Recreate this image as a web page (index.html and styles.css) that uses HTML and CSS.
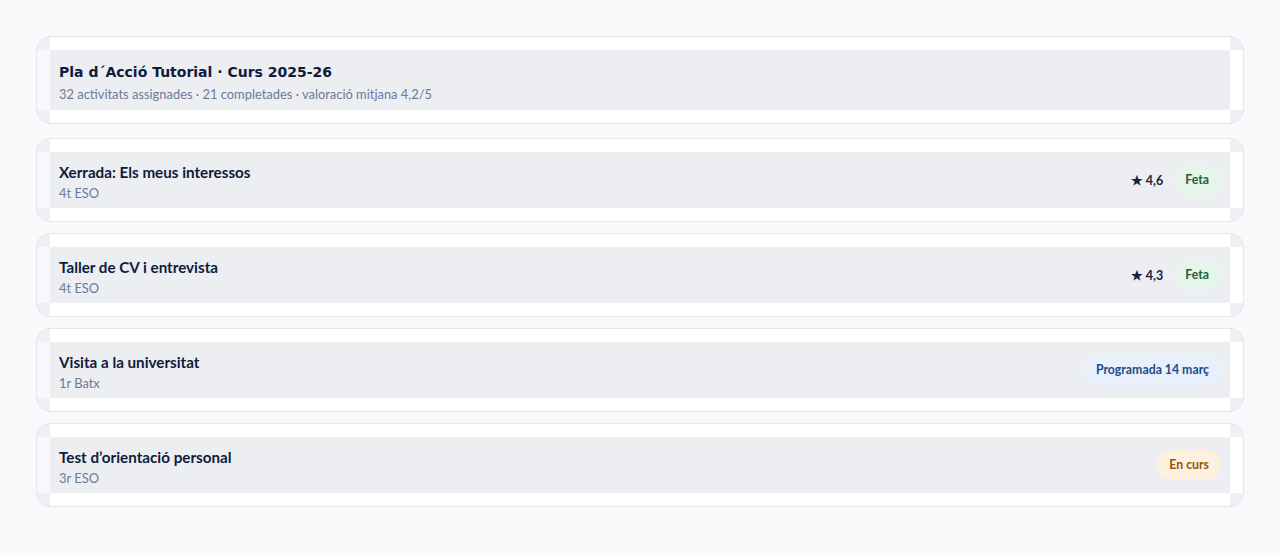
FILE: index.html
```html
<!DOCTYPE html>
<html lang="ca">
<head>
    <meta charset="UTF-8">
    <meta name="viewport" content="width=device-width, initial-scale=1.0">
    <title>Pla d'Acció Tutorial</title>
    <link rel="stylesheet" href="styles.css">
</head>
<body>
    <div class="pat-list">
        <div class="card card-head">
            <div class="row">
                <div class="info">
                    <h1>Pla d´Acció Tutorial · Curs 2025-26</h1>
                    <p class="meta">32 activitats assignades · 21 completades · valoració mitjana 4,2/5</p>
                </div>
            </div>
        </div>

        <div class="card">
            <div class="row">
                <div class="info">
                    <h2>Xerrada: Els meus interessos</h2>
                    <p class="meta">4t ESO</p>
                </div>
                <div class="side">
                    <span class="rating">★ 4,6</span>
                    <span class="pill done">Feta</span>
                </div>
            </div>
        </div>

        <div class="card">
            <div class="row">
                <div class="info">
                    <h2>Taller de CV i entrevista</h2>
                    <p class="meta">4t ESO</p>
                </div>
                <div class="side">
                    <span class="rating">★ 4,3</span>
                    <span class="pill done">Feta</span>
                </div>
            </div>
        </div>

        <div class="card">
            <div class="row">
                <div class="info">
                    <h2>Visita a la universitat</h2>
                    <p class="meta">1r Batx</p>
                </div>
                <div class="side">
                    <span class="pill planned">Programada 14 març</span>
                </div>
            </div>
        </div>

        <div class="card">
            <div class="row">
                <div class="info">
                    <h2>Test d’orientació personal</h2>
                    <p class="meta">3r ESO</p>
                </div>
                <div class="side">
                    <span class="pill ongoing">En curs</span>
                </div>
            </div>
        </div>
    </div>
</body>
</html>
```

FILE: styles.css
```css
body {
    margin: 0;
    background-color: #f8f9fb;
    font-family: Lato, "Noto Sans", sans-serif;
    color: #0f1b3d;
}
.pat-list {
    padding: 36px;
    display: flex;
    flex-direction: column;
    gap: 11px;
}
.card {
    border: 1px solid #e3e7ee;
    border-radius: 14px;
    padding: 13px;
    background:
        linear-gradient(#eef0f3, #eef0f3) left top / 13px 13px no-repeat,
        linear-gradient(#eef0f3, #eef0f3) right top / 13px 13px no-repeat,
        linear-gradient(#eef0f3, #eef0f3) left bottom / 13px 13px no-repeat,
        linear-gradient(#eef0f3, #eef0f3) right bottom / 13px 13px no-repeat,
        linear-gradient(#f7f8fa, #f7f8fa) left center / 13px 100% no-repeat,
        #fff;
}
.card-head {
    margin-bottom: 3px;
}
.row {
    background-color: #edeef2;
    display: flex;
    align-items: center;
    justify-content: space-between;
    padding: 0 9px;
    height: 56px;
}
.card-head .row {
    height: 60px;
}
.info h1 {
    font-family: "DejaVu Sans", sans-serif;
    font-size: 14px;
    font-weight: bold;
    margin: 6px 0 6px;
}
.info h2 {
    font-size: 15.2px;
    font-weight: bold;
    margin: 4px 0 4px;
}
.meta {
    margin: 0;
    font-size: 12.9px;
    color: #6b7a99;
}
.side {
    display: flex;
    align-items: center;
    gap: 10px;
}
.rating {
    font-size: 12.5px;
    font-weight: bold;
    color: #16213e;
}
.pill {
    font-size: 12.3px;
    font-weight: bold;
    border-radius: 14px;
    padding: 7px 12px 8px;
}
.pill.done {
    background-color: #e6f4ea;
    color: #1b6239;
}
.pill.planned {
    background-color: #e7f0fc;
    color: #1f4a87;
}
.pill.ongoing {
    background-color: #fdf0de;
    color: #945608;
}
```
